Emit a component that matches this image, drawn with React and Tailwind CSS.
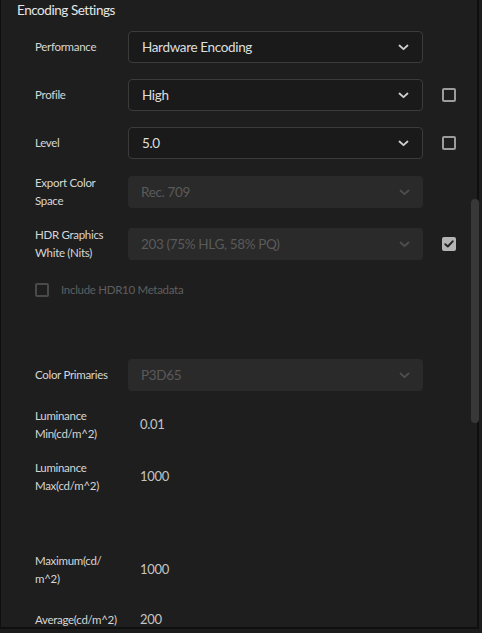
import React from 'react';

const font = { fontFamily: '"Lato", "Noto Sans", sans-serif' };

const Chevron = ({ disabled }) => (
  <svg width="11" height="7" viewBox="0 0 11 7" fill="none" className="shrink-0">
    <path d="M1.5 1.5 L5.5 5.2 L9.5 1.5" stroke={disabled ? '#4e4e4e' : '#d0d0d0'} strokeWidth="1.8" strokeLinecap="round" strokeLinejoin="round" />
  </svg>
);

const Select = ({ value, disabled }) => (
  <div
    className={
      disabled
        ? 'flex h-8 w-[295px] items-center justify-between rounded-[4px] bg-[#2a2a2a] pl-[13px] pr-[13px] text-[13.5px] tracking-[-0.35px] text-[#5a5a5a]'
        : 'flex h-8 w-[295px] items-center justify-between rounded-[4px] border border-[#3b3b3b] bg-[#1a1a1a] pl-[13px] pr-[13px] text-[13.5px] tracking-[-0.35px] text-[#dedede]'
    }
  >
    <span>{value}</span>
    <Chevron disabled={disabled} />
  </div>
);

const Checkbox = ({ checked, disabled }) => {
  if (checked) {
    return (
      <div className="flex h-[14px] w-[14px] items-center justify-center rounded-[2px] bg-[#b4b4b4]">
        <svg width="10" height="8" viewBox="0 0 10 8" fill="none">
          <path d="M1.3 4.2 L3.8 6.5 L8.7 1.3" stroke="#222" strokeWidth="1.9" strokeLinecap="round" strokeLinejoin="round" />
        </svg>
      </div>
    );
  }
  return (
    <div className={disabled ? 'h-[14px] w-[14px] rounded-[2px] border-2 border-[#4a4a4a]' : 'h-[14px] w-[14px] rounded-[2px] border-2 border-[#9c9c9c]'} />
  );
};

const Row = ({ label, children, check, tall, className = '' }) => (
  <div className={`flex items-center ${tall ? 'h-9' : 'h-8'} ${className}`}>
    <div className="w-[93px] shrink-0 text-[11.5px] leading-[18px] tracking-[-0.3px] text-[#d6d6d6]">{label}</div>
    {children}
    {check !== undefined && (
      <div className="ml-[19px]">
        <Checkbox checked={check === 'on'} />
      </div>
    )}
  </div>
);

const Value = ({ children }) => <div className="pl-[12px] text-[13px] tracking-[-0.3px] text-[#c4c4c4]">{children}</div>;

export default function App() {
  return (
    <div className="h-[633px] w-[482px] overflow-hidden bg-[#1c1c1c]" style={font}>
      <div className="relative h-[629px] w-[479px] border-b-2 border-l border-r-2 border-[#0f0f0f] bg-[#1e1e1e]">
        <div className="h-[20px] pl-[16px] text-[13.5px] leading-[20px] tracking-[-0.45px] text-[#e6e6e6]">Encoding Settings</div>
        <div className="pl-[34px]">
          <Row label="Performance" className="mt-[11px]">
            <Select value="Hardware Encoding" />
          </Row>
          <Row label="Profile" className="mt-[16px]" check="off">
            <Select value="High" />
          </Row>
          <Row label="Level" className="mt-[16px]" check="off">
            <Select value="5.0" />
          </Row>
          <Row label={<>Export Color<br />Space</>} tall className="mt-[15px]">
            <Select value="Rec. 709" disabled />
          </Row>
          <Row label={<>HDR Graphics<br />White (Nits)</>} tall className="mt-[16px]" check="on">
            <Select value="203 (75% HLG, 58% PQ)" disabled />
          </Row>
          <div className="mt-[18px] flex h-5 items-center">
            <Checkbox disabled />
            <span className="ml-[12px] text-[11.5px] tracking-[-0.3px] text-[#5e5e5e]">Include HDR10 Metadata</span>
          </div>
          <Row label="Color Primaries" className="mt-[59px]">
            <Select value="P3D65" disabled />
          </Row>
          <Row label={<>Luminance<br />Min(cd/m^2)</>} tall className="mt-[16px]">
            <Value>0.01</Value>
          </Row>
          <Row label={<>Luminance<br />Max(cd/m^2)</>} tall className="mt-[16px]">
            <Value>1000</Value>
          </Row>
          <Row label={<>Maximum(cd/<br />m^2)</>} tall className="mt-[57px]">
            <Value>1000</Value>
          </Row>
          <div className="mt-[22px] flex h-5 items-center">
            <div className="w-[93px] shrink-0 text-[11.5px] tracking-[-0.3px] text-[#d6d6d6]">Average(cd/m^2)</div>
            <Value>200</Value>
          </div>
        </div>
        <div className="absolute left-[470px] top-[199px] h-[224px] w-[8px] rounded-full bg-[#383838]" />
      </div>
    </div>
  );
}
